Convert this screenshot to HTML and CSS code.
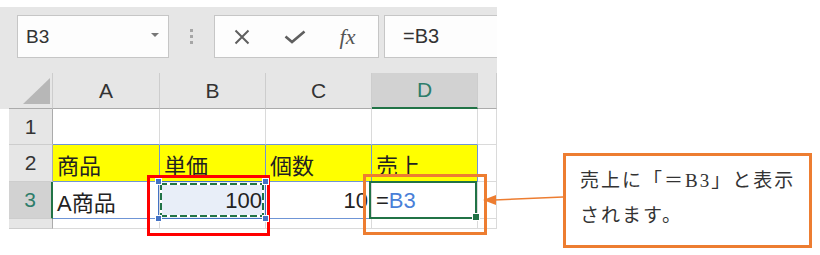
FILE: index.html
```html
<!DOCTYPE html>
<html lang="ja">
<head>
    <meta charset="UTF-8">
    <meta name="viewport" content="width=device-width, initial-scale=1.0">
    <title>売上セルの参照</title>
    <link rel="stylesheet" href="styles.css">
</head>
<body>
    <div class="page">
        <div class="excel">
            <!-- Formula bar -->
            <div class="toolbar">
                <div class="name-box">
                    <span>B3</span>
                    <span class="caret"></span>
                </div>
                <div class="grip">
                    <svg width="3" height="15" viewBox="0 0 3 15">
                        <rect x="0" y="0" width="3" height="3" fill="#a6a6a6"/>
                        <rect x="0" y="6" width="3" height="3" fill="#a6a6a6"/>
                        <rect x="0" y="12" width="3" height="3" fill="#a6a6a6"/>
                    </svg>
                </div>
                <div class="fx-buttons">
                    <span class="btn">
                        <svg width="16" height="16" viewBox="0 0 16 16">
                            <path d="M1.5 1.5 L14.5 14.5 M14.5 1.5 L1.5 14.5" stroke="#5f5f5f" stroke-width="2" fill="none"/>
                        </svg>
                    </span>
                    <span class="btn">
                        <svg width="22" height="14" viewBox="0 0 22 14">
                            <path d="M1.5 6.5 L8 12 L20.5 1.5" stroke="#5f5f5f" stroke-width="2.6" fill="none"/>
                        </svg>
                    </span>
                    <span class="btn fx">fx</span>
                </div>
                <div class="formula">=B3</div>
            </div>

            <!-- Sheet grid -->
            <div class="sheet">
                <div class="head corner">
                    <svg width="43" height="35" viewBox="0 0 43 35">
                        <polygon points="41,5 41,31 14,31" fill="#b7b7b7"/>
                    </svg>
                </div>
                <div class="head col">A</div>
                <div class="head col">B</div>
                <div class="head col">C</div>
                <div class="head col current">D</div>
                <div class="head col"></div>

                <div class="head row">1</div>
                <div class="cell edge-b"></div>
                <div class="cell edge-b"></div>
                <div class="cell edge-b"></div>
                <div class="cell edge-b"></div>
                <div class="cell"></div>

                <div class="head row">2</div>
                <div class="cell title">商品</div>
                <div class="cell title">単価</div>
                <div class="cell title">個数</div>
                <div class="cell title">売上</div>
                <div class="cell"></div>

                <div class="head row current">3</div>
                <div class="cell edge-b">A商品</div>
                <div class="cell edge-b num copied">
                    100
                    <i class="handle tl"></i>
                    <i class="handle tr"></i>
                    <i class="handle bl"></i>
                    <i class="handle br"></i>
                </div>
                <div class="cell edge-b num">10</div>
                <div class="cell active">=<span class="ref">B3</span></div>
                <div class="cell"></div>

                <div class="head row"></div>
                <div class="cell"></div>
                <div class="cell"></div>
                <div class="cell"></div>
                <div class="cell"></div>
                <div class="cell"></div>
            </div>
        </div>

        <div class="callout">売上に「＝B3」と表示<br>されます。</div>

        <div class="mark mark-red"></div>
        <div class="mark mark-orange"></div>
        <svg class="arrow" width="86" height="25" viewBox="0 0 86 25">
            <line x1="83" y1="12" x2="14" y2="15" stroke="#ed7d31" stroke-width="1.4"/>
            <polygon points="3,15 16,10 16,20" fill="#ed7d31"/>
        </svg>
    </div>
</body>
</html>
```

FILE: styles.css
```css
/* General */
body {
    margin: 0;
    background: #ffffff;
    font-family: 'Liberation Sans', 'Noto Sans CJK JP', sans-serif;
    color: #222;
}

.page {
    position: relative;
    display: flex;
    align-items: flex-start;
    height: 255px;
}

/* Excel window */
.excel {
    width: 497px;
    padding-top: 7px;
    overflow: hidden;
    flex-shrink: 0;
}

.toolbar {
    display: flex;
    align-items: flex-start;
    height: 66px;
    padding: 8px 0 0 17px;
    box-sizing: border-box;
    background: #e6e6e6;
}

.name-box {
    display: flex;
    align-items: center;
    justify-content: space-between;
    width: 152px;
    height: 43px;
    padding: 0 9px 0 8px;
    box-sizing: border-box;
    background: #fdfdfd;
    border: 1px solid #c6c6c6;
    font-size: 19px;
    color: #333;
}

.caret {
    width: 0;
    height: 0;
    border-left: 4px solid transparent;
    border-right: 4px solid transparent;
    border-top: 4px solid #777;
    margin-top: -4px;
}

.grip {
    display: flex;
    align-items: center;
    justify-content: center;
    width: 45px;
    height: 43px;
}

.fx-buttons {
    display: flex;
    width: 165px;
    height: 43px;
    box-sizing: border-box;
    background: #fdfdfd;
    border: 1px solid #c6c6c6;
}

.btn {
    flex: 1;
    display: flex;
    align-items: center;
    justify-content: center;
}

.btn.fx {
    font-family: 'Liberation Serif', serif;
    font-style: italic;
    font-size: 22px;
    color: #555;
    padding-right: 4px;
}

.formula {
    flex: 1;
    display: flex;
    align-items: center;
    height: 43px;
    margin-left: 5px;
    padding-left: 18px;
    box-sizing: border-box;
    background: #fdfdfd;
    border: 1px solid #c6c6c6;
    border-right: none;
    font-size: 20px;
    color: #333;
}

/* Sheet */
.sheet {
    display: grid;
    grid-template-columns: 44px 107px 106px 106px 106px 19px;
    grid-template-rows: 36px 36px 37px 37px 10px;
    padding-left: 9px;
    background: linear-gradient(#e6e6e6, #e6e6e6) left top / 9px 36px no-repeat;
    font-size: 22px;
    overflow: hidden;
}

.head {
    display: flex;
    align-items: center;
    justify-content: center;
    box-sizing: border-box;
    background: #e6e6e6;
    color: #333;
    font-size: 21px;
}

.head.col {
    border-right: 1px solid #cdcdcd;
    border-bottom: 1px solid #ababab;
}

.head.corner {
    border-right: 1px solid #cdcdcd;
    border-bottom: 1px solid #ababab;
    align-items: flex-start;
    justify-content: flex-start;
}

.head.row {
    border-right: 1px solid #ababab;
    border-bottom: 1px solid #cdcdcd;
}

.head.current {
    background: #d2d2d2;
    color: #2e7d6a;
}

.head.col.current {
    border-bottom: 2px solid #217346;
}

.head.row.current {
    border-right: 2px solid #217346;
}

.cell {
    display: flex;
    align-items: center;
    padding: 1px 3px 0 4px;
    box-sizing: border-box;
    border-right: 1px solid #dadada;
    border-bottom: 1px solid #dadada;
    background: #fff;
    white-space: nowrap;
}

.cell.edge-b {
    border-bottom-color: #6f95d6;
}

.cell.title {
    background: #ffff00;
    border-right-color: #6f95d6;
    border-bottom-color: #6f95d6;
}

.cell.num {
    justify-content: flex-end;
}

/* Copied / referenced cell B3 */
.cell.copied {
    position: relative;
    background: #e8eef8;
    border-right-color: #4472c4;
}

.cell.copied::before {
    content: "";
    position: absolute;
    inset: -1px -1px -1px -2px;
    border: 1px solid #4472c4;
}

.cell.copied::after {
    content: "";
    position: absolute;
    inset: 1px 1px 1px 0;
    background:
        repeating-linear-gradient(90deg, #217346 0 7px, #ffffff 7px 10px) left top / 100% 2px no-repeat,
        repeating-linear-gradient(90deg, #217346 0 7px, #ffffff 7px 10px) left bottom / 100% 2px no-repeat,
        repeating-linear-gradient(180deg, #217346 0 7px, #ffffff 7px 10px) left top / 2px 100% no-repeat,
        repeating-linear-gradient(180deg, #217346 0 7px, #ffffff 7px 10px) right top / 2px 100% no-repeat;
}

.handle {
    position: absolute;
    width: 7px;
    height: 7px;
    background: #4472c4;
    border: 1px solid #fff;
    box-sizing: border-box;
    z-index: 2;
}

.handle.tl { left: -5px; top: -4px; }
.handle.tr { right: -4px; top: -4px; }
.handle.bl { left: -5px; bottom: -4px; }
.handle.br { right: -4px; bottom: -4px; }

/* Active cell D3 */
.cell.active {
    position: relative;
}

.cell.active::before {
    content: "";
    position: absolute;
    inset: -1px 0 -1px -3px;
    border: 2px solid #217346;
}

.cell.active::after {
    content: "";
    position: absolute;
    right: -3px;
    bottom: -3px;
    width: 6px;
    height: 6px;
    background: #217346;
    border: 1px solid #fff;
}

.ref {
    color: #4a7fd8;
}

/* Annotations */
.callout {
    width: 249px;
    height: 95px;
    margin: 153px 0 0 66px;
    padding: 7px 0 0 14px;
    box-sizing: border-box;
    border: 3px solid #ed7d31;
    background: #fff;
    font-family: 'Liberation Serif', 'Noto Sans CJK JP', serif;
    font-size: 19px;
    line-height: 35px;
    letter-spacing: 2px;
    color: #333;
    white-space: nowrap;
}

.mark {
    position: absolute;
    box-sizing: border-box;
}

.mark-red {
    left: 147px;
    top: 175px;
    width: 123px;
    height: 61px;
    border: 3px solid #ff0000;
}

.mark-orange {
    left: 363px;
    top: 174px;
    width: 124px;
    height: 61px;
    border: 3px solid #ed7d31;
}

.arrow {
    position: absolute;
    left: 480px;
    top: 185px;
}
```
